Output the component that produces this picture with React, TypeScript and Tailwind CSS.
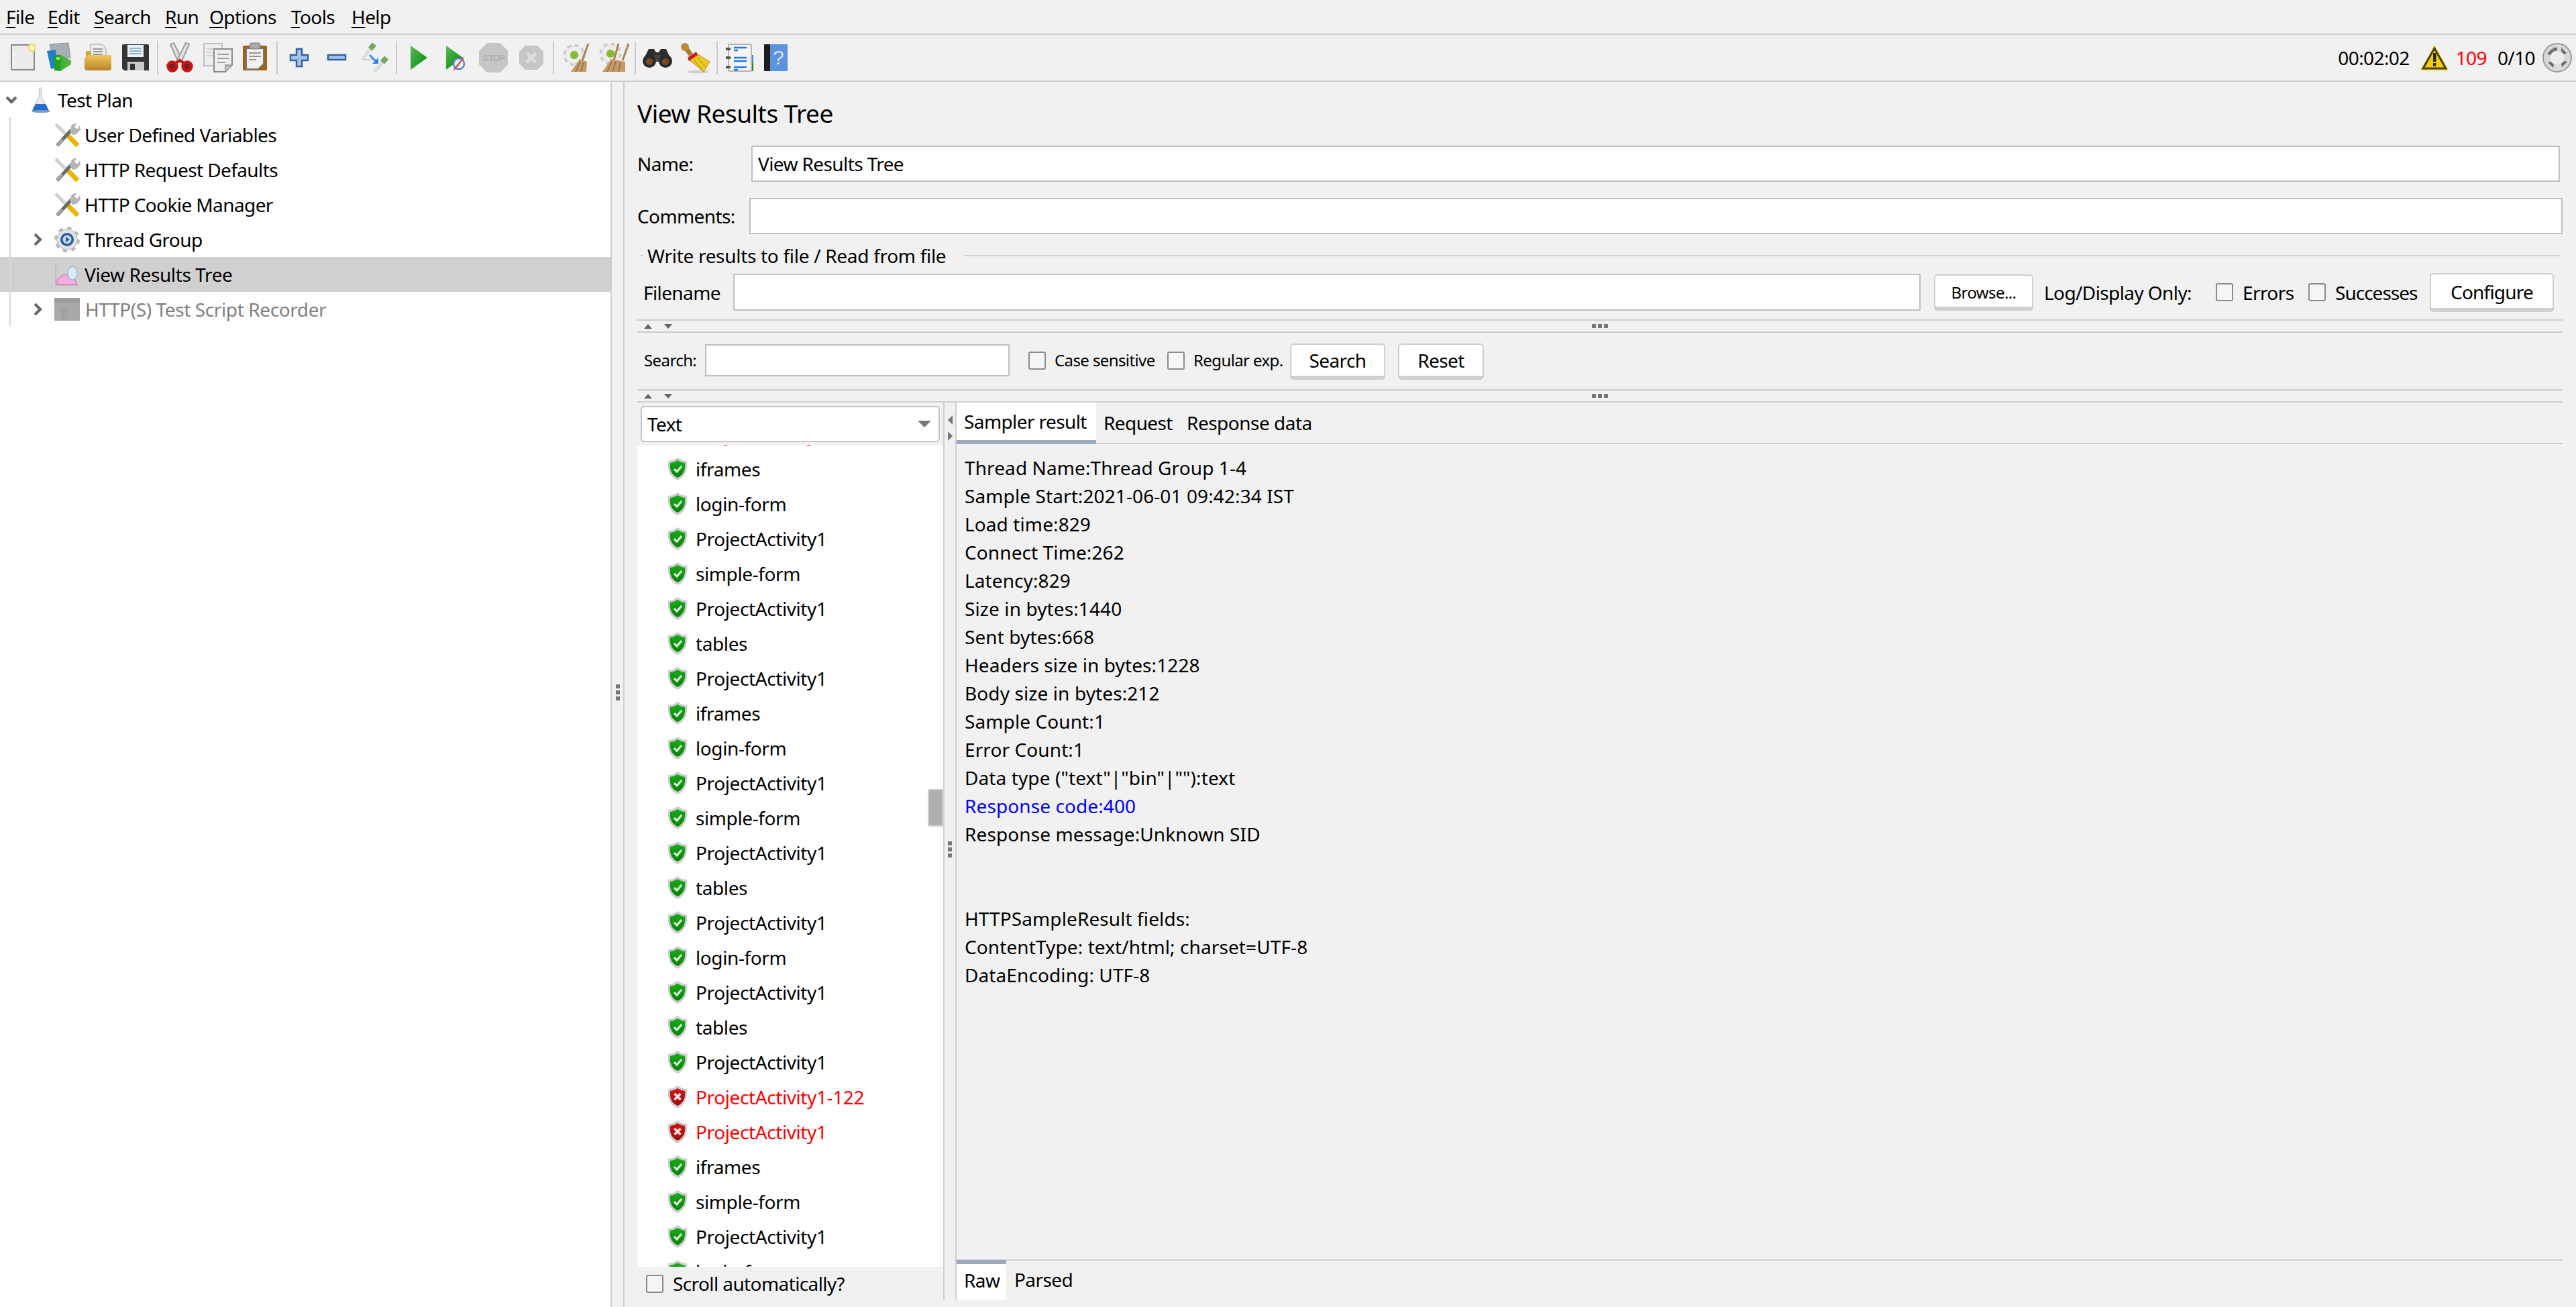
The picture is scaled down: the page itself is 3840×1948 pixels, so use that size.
import React from 'react';

const Ico: React.FC<{ children: React.ReactNode; size?: number }> = ({ children, size = 48 }) => (
  <svg width={size} height={size} viewBox={`0 0 ${size} ${size}`} className="shrink-0">
    {children}
  </svg>
);

const Defs = () => (
  <svg width="0" height="0" className="absolute">
    <defs>
      <linearGradient id="play" x1="0" y1="0" x2="1" y2="1">
        <stop offset="0" stopColor="#5cb85c" />
        <stop offset="1" stopColor="#008a00" />
      </linearGradient>
      <linearGradient id="folder" x1="0" y1="0" x2="0" y2="1">
        <stop offset="0" stopColor="#f2c75c" />
        <stop offset="1" stopColor="#b9832a" />
      </linearGradient>
      <linearGradient id="green" x1="0" y1="0" x2="1" y2="0">
        <stop offset="0" stopColor="#22a822" />
        <stop offset="1" stopColor="#60b848" />
      </linearGradient>
      <linearGradient id="shieldg" x1="0" y1="0" x2="0" y2="1">
        <stop offset="0" stopColor="#18ac18" />
        <stop offset="1" stopColor="#068206" />
      </linearGradient>
      <linearGradient id="shieldr" x1="0" y1="0" x2="0" y2="1">
        <stop offset="0" stopColor="#d01818" />
        <stop offset="1" stopColor="#9c0808" />
      </linearGradient>
    </defs>
  </svg>
);

const NewIcon = () => (
  <Ico>
    <rect x="7" y="5" width="34" height="37" fill="#ececec" stroke="#8a8a8a" strokeWidth="2" />
    <circle cx="12" cy="19" r="1.5" fill="#fff" />
    <circle cx="12" cy="30" r="1.5" fill="#fff" />
    <circle cx="38" cy="9" r="5" fill="#fff8c0" stroke="#efe27a" strokeWidth="3" />
  </Ico>
);
const TemplatesIcon = () => (
  <Ico>
    <path d="M8 4l28-2 3 22-26 2z" fill="#a8aeb4" stroke="#8e959c" />
    <path d="M4 14l13-2 3 26-10 3z" fill="#1f7fc8" />
    <path d="M15 20h9l16 8v6l-16 10-9-1z" fill="url(#green)" />
    <rect x="15" y="20" width="9" height="23" fill="#1ea01e" />
    <rect x="18" y="23" width="5" height="4" fill="#9ee07a" />
  </Ico>
);
const OpenIcon = () => (
  <Ico>
    <path d="M6 14h30v10H6z" fill="#d9a63c" />
    <path d="M13 4h17l6 6v18H13z" fill="#eeeeee" stroke="#9a9a9a" />
    <path d="M17 11h14M17 15h14M17 19h14" stroke="#9a9a9a" strokeWidth="2" />
    <path d="M4 24l8-4h32v19a4 4 0 0 1-4 4H8a4 4 0 0 1-4-4z" fill="url(#folder)" />
  </Ico>
);
const SaveIcon = () => (
  <Ico>
    <path d="M4 6a2 2 0 0 1 2-2h36a2 2 0 0 1 2 2v37H7l-3-3z" fill="#343434" />
    <rect x="12" y="5" width="24" height="18" fill="#eef2f8" />
    <path d="M15 10h18M15 14h18M15 18h18" stroke="#8fb0d0" strokeWidth="2" />
    <rect x="12" y="30" width="25" height="13" fill="#c8c8c8" />
    <rect x="16" y="33" width="7" height="9" fill="#333" />
  </Ico>
);
const CutIcon = () => (
  <Ico>
    <path d="M10 4l5-2 13 26-6 3z" fill="#e4e4e4" stroke="#9c9c9c" strokeWidth="2" />
    <path d="M38 4l-5-2-13 26 6 3z" fill="#e4e4e4" stroke="#9c9c9c" strokeWidth="2" />
    <path d="M18 32l6-4 6 4" stroke="#cc1414" strokeWidth="4" fill="none" />
    <circle cx="13" cy="37" r="6.5" fill="#7a2020" stroke="#cc1414" strokeWidth="4.5" />
    <circle cx="35" cy="37" r="6.5" fill="#7a2020" stroke="#cc1414" strokeWidth="4.5" />
  </Ico>
);
const CopyIcon = () => (
  <Ico>
    <rect x="4" y="3" width="27" height="33" fill="#eeeeee" stroke="#c0c0c0" strokeWidth="2" />
    <path d="M8 11h14M8 16h14M8 21h10" stroke="#cfcfcf" strokeWidth="2" />
    <path d="M19 11h27v24l-10 10H19z" fill="#efefef" stroke="#8c8c8c" strokeWidth="2" />
    <path d="M36 45V35h10" fill="#c0c0c0" stroke="#8c8c8c" strokeWidth="1.5" />
    <path d="M24 19h17M24 25h17M24 31h12" stroke="#a0a0a0" strokeWidth="2" />
  </Ico>
);
const PasteIcon = () => (
  <Ico>
    <rect x="6" y="6" width="36" height="37" rx="2" fill="#9c6410" />
    <path d="M11 10h26v23l-8 8H11z" fill="#f0f0f0" stroke="#777" strokeWidth="2" />
    <rect x="16" y="2" width="16" height="9" rx="3" fill="#a8a8a8" stroke="#777" />
    <path d="M15 17h18M15 22h18M15 27h11" stroke="#999" strokeWidth="2" />
  </Ico>
);
const PlusIcon = () => (
  <Ico>
    <path d="M20 11h8v9h9v8h-9v9h-8v-9h-9v-8h9z" fill="#a9c2e2" stroke="#2f64a8" strokeWidth="2.5" />
  </Ico>
);
const MinusIcon = () => (
  <Ico>
    <rect x="11" y="20" width="26" height="7" fill="#a9c2e2" stroke="#2f64a8" strokeWidth="2.5" />
  </Ico>
);
const ToggleIcon = () => (
  <Ico>
    <path d="M6 27l15-20" stroke="#dcdcdc" strokeWidth="5" />
    <path d="M18 11l6-7" stroke="#74a860" strokeWidth="8" />
    <path d="M6 27h17" stroke="#d4d4d4" strokeWidth="2" />
    <path d="M24 45l15-17" stroke="#dcdcdc" strokeWidth="5" />
    <path d="M36 31l6-7" stroke="#74a860" strokeWidth="8" />
    <path d="M17 20l11 11" stroke="#3d8cf0" strokeWidth="3" />
    <path d="M30 33H21l9-9z" fill="#2f80ee" />
  </Ico>
);
const PlayIcon = () => (
  <Ico>
    <path d="M12 6l25 18-25 18z" fill="url(#play)" />
  </Ico>
);
const PlayNoTimerIcon = () => (
  <Ico>
    <path d="M9 6l25 18L9 42z" fill="url(#play)" />
    <circle cx="28" cy="33" r="8" fill="#eef3fa" stroke="#4a8ad0" strokeWidth="2.5" />
    <path d="M21 42l14-18" stroke="#e04848" strokeWidth="2.5" />
  </Ico>
);
const StopIcon = () => (
  <Ico>
    <path d="M14 2h20l11 12v20L34 46H14L2 34V14z" fill="#c6c6c6" />
    <text x="24" y="29" textAnchor="middle" fontSize="13" fontWeight="700" fill="#b0b0b0" fontFamily="Liberation Sans, sans-serif">STOP</text>
  </Ico>
);
const ShutdownIcon = () => (
  <Ico>
    <path d="M15 6h18l9 9v18l-9 9H15l-9-9V15z" fill="#c6c6c6" />
    <path d="M17 17l14 14M31 17L17 31" stroke="#dcdcdc" strokeWidth="5" />
  </Ico>
);
const Cog: React.FC<{ cx: number; cy: number }> = ({ cx, cy }) => (
  <g>
    <circle cx={cx} cy={cy} r="14" fill="none" stroke="#cccccc" strokeWidth="5" strokeDasharray="6 5" />
    <circle cx={cx} cy={cy} r="13" fill="#eeeeee" stroke="#d8d8d8" strokeWidth="1" />
    <circle cx={cx} cy={cy} r="6" fill="#86bc2c" stroke="#a8c878" strokeWidth="1" />
  </g>
);
const ClearIcon = () => (
  <Ico>
    <Cog cx={22} cy={20} />
    <path d="M43 3L34 28" stroke="#a88458" strokeWidth="3" />
    <path d="M30 26l11 4-1 15H17z" fill="#c49a68" />
    <path d="M31 30l-7 15M36 31l-4 14" stroke="#94703f" strokeWidth="1.5" />
  </Ico>
);
const ClearAllIcon = () => (
  <Ico>
    <Cog cx={20} cy={18} />
    <path d="M32 3L25 28M47 3L38 28" stroke="#a88458" strokeWidth="3" />
    <path d="M21 26l21 4v15H8z" fill="#c49a68" />
    <path d="M22 30l-7 15M28 30l-5 15M35 31l-3 14" stroke="#94703f" strokeWidth="1.5" />
  </Ico>
);
const SearchIcon = () => (
  <Ico>
    <path d="M11 11h8l3 5h4l3-5h8l8 18H2z" fill="#2d2d2d" />
    <rect x="19" y="20" width="10" height="10" fill="#444" />
    <circle cx="12" cy="29" r="10" fill="#2b2b2b" />
    <circle cx="36" cy="29" r="10" fill="#2b2b2b" />
    <circle cx="12" cy="30" r="5" fill="#7a4a1c" />
    <circle cx="36" cy="30" r="5" fill="#7a4a1c" />
  </Ico>
);
const BroomIcon = () => (
  <Ico>
    <ellipse cx="28" cy="45" rx="16" ry="2.5" fill="#cfcfcf" />
    <path d="M10 9l8 11" stroke="#b07a30" strokeWidth="7" />
    <circle cx="9" cy="8" r="6" fill="#c08a40" />
    <path d="M15 27l12-9 19 12-9 15z" fill="#eec828" stroke="#b8960c" />
    <path d="M13 24l13-9 2 5-13 9z" fill="#cc1c1c" />
    <path d="M22 26l13 17M27 23l13 15" stroke="#c8a414" strokeWidth="1.5" />
  </Ico>
);
const LoggerIcon = () => (
  <Ico>
    <rect x="41" y="20" width="4" height="12" fill="#3d8ae8" />
    <rect x="41" y="32" width="4" height="12" fill="#1a8a1a" />
    <rect x="8" y="4" width="34" height="40" rx="2" fill="#f4f4f4" stroke="#b4b4b4" strokeWidth="2" />
    <path d="M4 11h7M4 24h7M4 38h7" stroke="#555" strokeWidth="4" />
    <path d="M16 9h19M16 13h6M16 24h19M16 29h19M16 38h19M16 42h6" stroke="#1f78e8" strokeWidth="2.5" />
  </Ico>
);
const HelpIcon = () => (
  <Ico>
    <rect x="12" y="4" width="28" height="40" fill="#5b94dc" />
    <rect x="5" y="4" width="9" height="40" rx="1" fill="#1c1c1c" />
    <text x="26" y="34" textAnchor="middle" fontSize="30" fill="#d7e5f6" fontFamily="Liberation Sans, sans-serif">?</text>
  </Ico>
);

const FlaskIcon = () => (
  <svg width="32" height="40" viewBox="0 0 32 40" className="shrink-0">
    <path d="M14 2h3v14l9 16H4l9-16z" fill="#e8eaec" stroke="#b8bcc2" />
    <path d="M8 26h15l5 10H3z" fill="#1f6fd0" />
    <ellipse cx="16" cy="37" rx="14" ry="2" fill="#7f9cc0" />
  </svg>
);
const ToolIcon = () => (
  <svg width="40" height="40" viewBox="0 0 40 40" className="shrink-0">
    <path d="M3 4l15 15" stroke="#d0d0d0" strokeWidth="5" />
    <path d="M21 21l15 15" stroke="#eab400" strokeWidth="7" />
    <path d="M5 36l22-24" stroke="#6a6a6a" strokeWidth="5" />
    <path d="M5 36l8-9" stroke="#b0b0b0" strokeWidth="3" />
    <path d="M24 14l3-9 7-3-3 7 5 2 3-5 1 6-6 7-6 1z" fill="#b4b4b4" />
  </svg>
);
const GearIcon = () => (
  <svg width="40" height="40" viewBox="0 0 40 40" className="shrink-0">
    <circle cx="20" cy="20" r="16" fill="#dcdcdc" stroke="#b8b8b8" strokeWidth="6" strokeDasharray="6 6.5" />
    <circle cx="20" cy="20" r="15" fill="#e2e2e2" stroke="#c4c4c4" />
    <circle cx="20" cy="20" r="10" fill="#2a5aa0" />
    <circle cx="20" cy="20" r="6.5" fill="#c6d8ee" />
    <path d="M18 16l6 4-6 4z" fill="#2a5aa0" />
  </svg>
);
const ChartIcon = () => (
  <svg width="40" height="40" viewBox="0 0 40 40" className="shrink-0">
    <path d="M3 3v33h34" fill="none" stroke="#b8b8b8" strokeWidth="1.5" />
    <path d="M5 35v-7l11-9 7 5 8 2 4 9z" fill="#f4aede" stroke="#d060a8" strokeWidth="1" />
    <ellipse cx="28" cy="18" rx="7" ry="10" fill="#dceafa" stroke="#9cbce0" strokeWidth="1.5" />
  </svg>
);
const RecorderIcon = () => (
  <svg width="40" height="40" viewBox="0 0 40 40" className="shrink-0">
    <rect x="1" y="3" width="38" height="34" fill="#a8a8a8" />
    <rect x="1" y="3" width="38" height="7" fill="#9c9c9c" />
    <rect x="12" y="18" width="7" height="6" fill="none" stroke="#909090" />
    <rect x="12" y="28" width="7" height="6" fill="none" stroke="#909090" />
  </svg>
);
const ChevronDown = () => (
  <svg width="20" height="14" viewBox="0 0 20 14"><path d="M3 3l7 7 7-7" fill="none" stroke="#666" strokeWidth="4" /></svg>
);
const ChevronRight = () => (
  <svg width="14" height="20" viewBox="0 0 14 20"><path d="M3 2l8 8-8 8" fill="none" stroke="#666" strokeWidth="4" /></svg>
);

const Shield: React.FC<{ ok: boolean }> = ({ ok }) => (
  <svg width="30" height="36" viewBox="0 0 30 36" className="shrink-0">
    <path d="M15 1l7 4 7 1c1 12-1 23-14 29C2 29 0 18 1 6l7-1z" fill="#cdcdcd" />
    <path d="M15 5l6 3 5 1c1 9-1 17-11 22C5 26 3 18 4 9l5-1z" fill={ok ? 'url(#shieldg)' : 'url(#shieldr)'} />
    {ok ? (
      <path d="M10 18l4 4 7-8" fill="none" stroke="#e6f8e6" strokeWidth="3" />
    ) : (
      <path d="M10.5 13l9 9m0-9l-9 9" fill="none" stroke="#f8e4e4" strokeWidth="3.5" />
    )}
  </svg>
);

const Checkbox = () => <div className="w-[26px] h-[27px] shrink-0 bg-[#f6f6f6] border-2 border-[#8c8c8c] rounded-[3px]" />;

const SplitArrows = () => (
  <div className="flex items-center gap-[18px] pl-[10px] h-full">
    <div className="w-0 h-0 border-x-[6px] border-x-transparent border-b-[7px] border-b-[#666]" />
    <div className="w-0 h-0 border-x-[6px] border-x-transparent border-t-[7px] border-t-[#666]" />
  </div>
);

const Dots: React.FC<{ row?: boolean }> = ({ row }) => (
  <div className={row ? 'flex gap-[3px]' : 'flex flex-col gap-[3px]'}>
    <div className="w-[6px] h-[6px] bg-[#777]" />
    <div className="w-[6px] h-[6px] bg-[#777]" />
    <div className="w-[6px] h-[6px] bg-[#777]" />
  </div>
);

const HSplit = () => (
  <div className="relative h-[20px] border-y-2 border-[#cfcfcf] shrink-0">
    <SplitArrows />
    <div className="absolute left-1/2 -ml-[12px] top-[5px]"><Dots row /></div>
  </div>
);

const toolbar = [
  [NewIcon, TemplatesIcon, OpenIcon, SaveIcon],
  [CutIcon, CopyIcon, PasteIcon],
  [PlusIcon, MinusIcon, ToggleIcon],
  [PlayIcon, PlayNoTimerIcon, StopIcon, ShutdownIcon],
  [ClearIcon, ClearAllIcon],
  [SearchIcon, BroomIcon],
  [LoggerIcon, HelpIcon],
];

const menus = [
  { k: 'F', r: 'ile', w: 'w-[62px]' },
  { k: 'E', r: 'dit', w: 'w-[69px]' },
  { k: 'S', r: 'earch', w: 'w-[106px]' },
  { k: 'R', r: 'un', w: 'w-[66px]' },
  { k: 'O', r: 'ptions', w: 'w-[122px]' },
  { k: 'T', r: 'ools', w: 'w-[90px]' },
  { k: 'H', r: 'elp', w: 'w-[70px]' },
];

const results: [string, boolean][] = [
  ['ProjectActivity1', false],
  ['iframes', true],
  ['login-form', true],
  ['ProjectActivity1', true],
  ['simple-form', true],
  ['ProjectActivity1', true],
  ['tables', true],
  ['ProjectActivity1', true],
  ['iframes', true],
  ['login-form', true],
  ['ProjectActivity1', true],
  ['simple-form', true],
  ['ProjectActivity1', true],
  ['tables', true],
  ['ProjectActivity1', true],
  ['login-form', true],
  ['ProjectActivity1', true],
  ['tables', true],
  ['ProjectActivity1', true],
  ['ProjectActivity1-122', false],
  ['ProjectActivity1', false],
  ['iframes', true],
  ['simple-form', true],
  ['ProjectActivity1', true],
  ['login-form', true],
];

const sampleLines = [
  'Thread Name:Thread Group 1-4',
  'Sample Start:2021-06-01 09:42:34 IST',
  'Load time:829',
  'Connect Time:262',
  'Latency:829',
  'Size in bytes:1440',
  'Sent bytes:668',
  'Headers size in bytes:1228',
  'Body size in bytes:212',
  'Sample Count:1',
  'Error Count:1',
  'Data type ("text"|"bin"|""):text',
];

const App: React.FC = () => {
  return (
    <div className="w-[3840px] h-[1948px] overflow-hidden flex flex-col bg-[#f1f1f1] text-black text-[28px] tracking-[-0.6px] font-['Noto_Sans',sans-serif]">
      <Defs />

      {/* Menu */}
      <div className="h-[52px] shrink-0 flex items-center pl-[9px] border-b-2 border-[#cfcfcf]">
        {menus.map(m => (
          <div key={m.k} className={m.w}>
            <span className="underline underline-offset-4">{m.k}</span>
            {m.r}
          </div>
        ))}
      </div>

      {/* Toolbar */}
      <div className="h-[70px] shrink-0 flex items-center pl-[6px] pr-[6px] border-b-2 border-[#cfcfcf]">
        {toolbar.map((group, i) => (
          <React.Fragment key={i}>
            {i > 0 && <div className="w-[2px] h-[50px] mx-1 bg-[#cccccc]" />}
            {group.map((Icon, j) => (
              <div key={j} className="w-14 flex justify-center">
                <Icon />
              </div>
            ))}
          </React.Fragment>
        ))}
        <div className="ml-auto flex items-center">
          <span>00:02:02</span>
          <svg width="44" height="42" viewBox="0 0 44 42" className="ml-[15px]">
            <path d="M22 2L43 40H1z" fill="#f8d800" stroke="#f4e8a0" strokeWidth="1" />
            <path d="M22 7L39 37H5z" fill="#f4cf00" stroke="#4a4010" strokeWidth="3" />
            <rect x="20" y="14" width="4.5" height="13" fill="#2a2408" />
            <rect x="20" y="29" width="4.5" height="4.5" fill="#2a2408" />
          </svg>
          <span className="ml-[10px] text-[#ff0000]">109</span>
          <span className="ml-[16px]">0/10</span>
          <svg width="44" height="44" viewBox="0 0 44 44" className="ml-[11px]">
            <circle cx="22" cy="22" r="21" fill="#d8d8d8" stroke="#9a9a9a" strokeWidth="2" />
            <circle cx="22" cy="22" r="10" fill="#ececec" />
            <path d="M16 7l6 0 0 4-6 2zM28 7l8 8-4 2-4-5zM7 16l8-8 1 5-5 5zM37 28l-8 8-1-5 5-4zM16 37l-8-8 4-1 5 4z" fill="#6a6a6a" />
          </svg>
        </div>
      </div>

      <div className="flex-1 min-h-0 flex">
        {/* Tree */}
        <div className="relative w-[912px] shrink-0 bg-white border-r-2 border-[#cfcfcf] pt-px">
          <div className="absolute left-[14px] top-[52px] w-[2px] h-[312px] bg-[#d8d8d8]" />
          <div className="h-[52px] flex items-center pl-[7px]">
            <ChevronDown />
            <div className="ml-[18px]"><FlaskIcon /></div>
            <span className="ml-[9px]">Test Plan</span>
          </div>
          {['User Defined Variables', 'HTTP Request Defaults', 'HTTP Cookie Manager'].map(t => (
            <div key={t} className="h-[52px] flex items-center pl-[80px]">
              <ToolIcon />
              <span className="ml-[6px]">{t}</span>
            </div>
          ))}
          <div className="h-[52px] flex items-center pl-[49px]">
            <ChevronRight />
            <div className="ml-[17px]"><GearIcon /></div>
            <span className="ml-[6px]">Thread Group</span>
          </div>
          <div className="h-[52px] flex items-center pl-[80px] bg-[#d0d0d0]">
            <ChartIcon />
            <span className="ml-[6px] tracking-[-0.4px]">View Results Tree</span>
          </div>
          <div className="h-[52px] flex items-center pl-[49px] text-[#808080]">
            <ChevronRight />
            <div className="ml-[17px]"><RecorderIcon /></div>
            <span className="ml-[7px] tracking-[-0.4px]">HTTP(S) Test Script Recorder</span>
          </div>
        </div>

        {/* Resizer */}
        <div className="w-[17px] shrink-0 flex items-center justify-center pb-[6px]"><Dots /></div>

        {/* Right panel */}
        <div className="flex-1 min-w-0 flex flex-col border-l-2 border-[#cfcfcf] pl-[19px] pr-[20px] pb-[10px]">
          <div className="h-[95px] shrink-0 flex items-center text-[37px] tracking-[-0.5px] pb-[2px]">View Results Tree</div>

          <div className="flex items-center h-[54px] shrink-0">
            <span className="w-[170px] shrink-0">Name:</span>
            <div className="flex-1 h-full mr-[4px] bg-white border-2 border-[#c0c0c0] flex items-center pl-2">View Results Tree</div>
          </div>
          <div className="flex items-center h-[54px] shrink-0 mt-[24px]">
            <span className="w-[167px] shrink-0">Comments:</span>
            <div className="flex-1 h-full bg-white border-2 border-[#c0c0c0]" />
          </div>

          {/* Write results group */}
          <div className="flex items-center h-[40px] shrink-0 mt-[12px] pl-[3px]">
            <div className="w-[6px] h-[2px] bg-[#d4d4d4]" />
            <span className="ml-[6px] tracking-[-0.3px]">Write results to file / Read from file</span>
            <div className="flex-1 h-[2px] ml-[27px] mr-[4px] bg-[#d4d4d4]" />
          </div>
          <div className="flex items-center h-[55px] shrink-0 mt-[7px] pl-[9px]">
            <span className="w-[134px] shrink-0">Filename</span>
            <div className="w-[1770px] h-full bg-white border-2 border-[#c0c0c0]" />
            <div className="ml-[20px] w-[148px] h-[54px] shrink-0 bg-white rounded-[5px] border-2 border-[#cfcfcf] border-b-[6px] flex items-center justify-center text-[24px] pt-[4px]">Browse...</div>
            <span className="ml-[16px]">Log/Display Only:</span>
            <div className="ml-[36px]"><Checkbox /></div>
            <span className="ml-[14px] w-[72px] whitespace-nowrap">Errors</span>
            <div className="ml-[26px]"><Checkbox /></div>
            <span className="ml-[14px] w-[121px] whitespace-nowrap tracking-[-1px]">Successes</span>
            <div className="ml-[20px] w-[185px] h-[58px] shrink-0 bg-white rounded-[5px] border-2 border-[#cfcfcf] border-b-[6px] flex items-center justify-center pt-[2px] tracking-[-0.8px]">Configure</div>
          </div>
          <div className="mt-[13px]"><HSplit /></div>

          {/* Search */}
          <div className="flex items-center h-[48px] shrink-0 mt-[17px] pl-[10px] text-[24px]">
            <span className="w-[91px] shrink-0">Search:</span>
            <div className="w-[454px] h-full bg-white border-2 border-[#c0c0c0]" />
            <div className="ml-[28px]"><Checkbox /></div>
            <span className="ml-[13px] w-[168px]">Case sensitive</span>
            <Checkbox />
            <span className="ml-[13px] w-[144px]">Regular exp.</span>
            <div className="mt-[4px] w-[142px] h-[54px] shrink-0 bg-white rounded-[5px] border-2 border-[#cfcfcf] border-b-[6px] flex items-center justify-center text-[28px]">Search</div>
            <div className="mt-[4px] ml-[19px] w-[128px] h-[54px] shrink-0 bg-white rounded-[5px] border-2 border-[#cfcfcf] border-b-[6px] flex items-center justify-center text-[28px]">Reset</div>
          </div>
          <div className="mt-[19px]"><HSplit /></div>

          {/* Results split */}
          <div className="flex-1 min-h-0 flex">
            <div className="relative w-[456px] shrink-0 flex flex-col">
              <div className="h-[64px] shrink-0 pt-[5px] pl-[5px] pr-[5px]">
                <div className="h-[54px] bg-white border-2 border-[#c4c4c4] rounded-[5px] flex items-center justify-between pl-[8px] pr-[11px]">
                  <span>Text</span>
                  <div className="w-0 h-0 border-x-[10px] border-x-transparent border-t-[10px] border-t-[#777]" />
                </div>
              </div>
              <div className="relative flex-1 min-h-0 overflow-hidden bg-white">
                <div className="-mt-[43px]">
                  {results.map(([name, ok], i) => (
                    <div key={i} className={`h-[52px] flex items-center pl-[45px] tracking-[-0.4px] ${ok ? 'text-black' : 'text-[#ff0000]'}`}>
                      <Shield ok={ok} />
                      <span className="ml-[12px]">{name}</span>
                    </div>
                  ))}
                </div>
                <div className="absolute right-0 top-[512px] w-[23px] h-[56px] bg-[#b0b0b0] border-2 border-[#d0d0d0]" />
              </div>
              <div className="h-[50px] shrink-0 flex items-center pl-[13px]">
                <Checkbox />
                <span className="ml-[14px]">Scroll automatically?</span>
              </div>
            </div>

            <div className="w-[2px] shrink-0 bg-[#cfcfcf]" />
            <div className="relative w-[16px] shrink-0 flex flex-col items-center">
              <div className="mt-[19px] w-0 h-0 border-y-[7px] border-y-transparent border-r-[7px] border-r-[#777]" />
              <div className="mt-[10px] w-0 h-0 border-y-[7px] border-y-transparent border-l-[7px] border-l-[#777]" />
              <div className="mt-[597px]"><Dots /></div>
            </div>

            <div className="flex-1 min-w-0 flex flex-col border-l-2 border-[#cfcfcf]">
              <div className="h-[62px] shrink-0 flex border-b-2 border-[#cfcfcf]">
                <div className="-mb-[2px] w-[208px] pl-[11px] bg-white border-b-[6px] border-[#9da9be] flex items-center">Sampler result</div>
                <div className="pl-[11px] w-[135px] flex items-center">Request</div>
                <div className="flex items-center tracking-[-0.5px]">Response data</div>
              </div>
              <div className="flex-1 min-h-0 pt-[14px] pl-[12px] leading-[42px] tracking-[0.1px]">
                {sampleLines.map(l => (
                  <div key={l}>{l}</div>
                ))}
                <div className="text-[#0000ff]">Response code:400</div>
                <div>Response message:Unknown SID</div>
                <div className="h-[84px]" />
                <div>HTTPSampleResult fields:</div>
                <div>ContentType: text/html; charset=UTF-8</div>
                <div>DataEncoding: UTF-8</div>
              </div>
              <div className="h-[61px] shrink-0 flex border-t-2 border-[#cfcfcf]">
                <div className="-mt-[1px] w-[74px] pl-[11px] pb-[6px] bg-white border-t-[6px] border-[#9da9be] flex items-center">Raw</div>
                <div className="pl-[12px] pb-[3px] flex items-center">Parsed</div>
              </div>
            </div>
          </div>
        </div>
      </div>
    </div>
  );
};

export default App;
